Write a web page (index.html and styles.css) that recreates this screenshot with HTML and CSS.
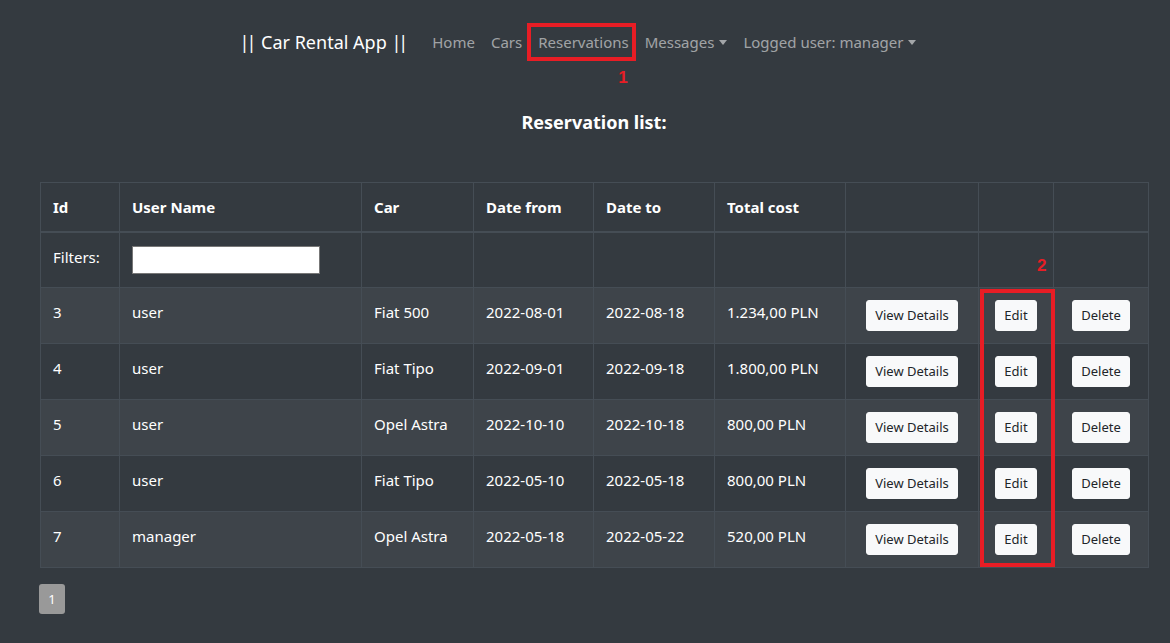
FILE: index.html
```html
<!DOCTYPE html>
<html lang="en">
<head>
<meta charset="utf-8">
<title>Car Rental App</title>
<link rel="stylesheet" href="styles.css">
</head>
<body>
<nav class="navbar">
  <a class="brand"><span class="pipes">||</span> Car Rental App <span class="pipes">||</span></a>
  <ul class="nav">
    <li><a class="nav-link">Home</a></li>
    <li><a class="nav-link">Cars</a></li>
    <li class="marked"><a class="nav-link">Reservations</a><span class="mark-box box-1"></span><span class="mark-num num-1">1</span></li>
    <li><a class="nav-link dropdown">Messages</a></li>
    <li><a class="nav-link dropdown">Logged user: manager</a></li>
  </ul>
</nav>

<main class="content">
  <h2 class="title">Reservation list:</h2>
  <div class="table-wrap">
    <table class="table">
      <colgroup>
        <col style="width:79px"><col style="width:242px"><col style="width:112px"><col style="width:120px"><col style="width:121px"><col style="width:131px"><col style="width:133px"><col style="width:75px"><col style="width:95px">
      </colgroup>
      <thead>
        <tr class="head-row">
          <th>Id</th><th>User Name</th><th>Car</th><th>Date from</th><th>Date to</th><th>Total cost</th><th></th><th></th><th></th>
        </tr>
        <tr class="filter-row">
          <td>Filters:</td><td><input class="filter-input" type="text"></td><td></td><td></td><td></td><td></td><td></td><td class="edit-col"><span class="mark-num num-2">2</span></td><td></td>
        </tr>
      </thead>
      <tbody>
        <tr><td>3</td><td>user</td><td>Fiat 500</td><td>2022-08-01</td><td>2022-08-18</td><td>1.234,00 PLN</td><td class="c"><button class="btn">View Details</button></td><td class="c"><button class="btn">Edit</button></td><td class="c"><button class="btn">Delete</button></td></tr>
        <tr><td>4</td><td>user</td><td>Fiat Tipo</td><td>2022-09-01</td><td>2022-09-18</td><td>1.800,00 PLN</td><td class="c"><button class="btn">View Details</button></td><td class="c"><button class="btn">Edit</button></td><td class="c"><button class="btn">Delete</button></td></tr>
        <tr><td>5</td><td>user</td><td>Opel Astra</td><td>2022-10-10</td><td>2022-10-18</td><td>800,00 PLN</td><td class="c"><button class="btn">View Details</button></td><td class="c"><button class="btn">Edit</button></td><td class="c"><button class="btn">Delete</button></td></tr>
        <tr><td>6</td><td>user</td><td>Fiat Tipo</td><td>2022-05-10</td><td>2022-05-18</td><td>800,00 PLN</td><td class="c"><button class="btn">View Details</button></td><td class="c"><button class="btn">Edit</button></td><td class="c"><button class="btn">Delete</button></td></tr>
        <tr><td>7</td><td>manager</td><td>Opel Astra</td><td>2022-05-18</td><td>2022-05-22</td><td>520,00 PLN</td><td class="c"><button class="btn">View Details</button></td><td class="c"><button class="btn">Edit</button></td><td class="c"><button class="btn">Delete</button></td></tr>
      </tbody>
    </table>
    <span class="mark-box box-2"></span>
  </div>
  <div class="pagination"><span class="page">1</span></div>
</main>
</body>
</html>
```

FILE: styles.css
```css
* { box-sizing: border-box; }
html, body { margin: 0; padding: 0; }
body {
  background: #343a40;
  color: #fff;
  font-family: "Noto Sans", "Open Sans", "Liberation Sans", sans-serif;
  font-size: 15px;
  line-height: 1.5;
  width: 1170px;
  height: 643px;
  overflow: hidden;
}
.navbar {
  display: flex;
  justify-content: center;
  align-items: center;
  height: 84px;
  margin-left: -6px;
}
.brand {
  font-size: 18px;
  color: #fff;
  margin-right: 16px;
}
.pipes { letter-spacing: -3px; margin-right: 3px; }
.nav {
  display: flex;
  list-style: none;
  margin: 0;
  padding: 0;
}
.nav li { position: relative; }
.nav-link {
  display: block;
  padding: 8px 8px;
  color: rgba(255,255,255,.55);
  font-size: 15px;
}
.dropdown::after {
  content: "";
  display: inline-block;
  margin-left: 5px;
  vertical-align: 3px;
  border-top: 5px solid;
  border-right: 4px solid transparent;
  border-left: 4px solid transparent;
}
.mark-box {
  position: absolute;
  border: 4px solid #e81d25;
  pointer-events: none;
}
.box-1 { left: -3px; right: 1px; top: 0; height: 38px; }
.mark-num {
  position: absolute;
  color: #e81d25;
  font-weight: bold;
  font-size: 17px;
  font-family: "Liberation Sans", sans-serif;
}
.num-1 { right: 9px; top: 42px; }
.content { padding: 0 22px 0 40px; }
.title {
  text-align: center;
  font-size: 18px;
  font-weight: bold;
  margin: 23px 0 45px;
  line-height: 30px;
}
.table-wrap { position: relative; width: 1108px; }
.table {
  width: 1108px;
  table-layout: fixed;
  border-collapse: collapse;
  border: 1px solid #8c8f93;
}
.table th, .table td {
  padding: 12px 12px;
  text-align: left;
  vertical-align: top;
  border: 1px solid #454d55;
  line-height: 24px;
}
.table th { font-weight: bold; border-bottom-width: 2px; }
.table td.c { text-align: center; padding: 12px 6px 10px; }
.filter-row td { height: 55px; }
.filter-input {
  display: block;
  width: 188px;
  height: 28px;
  border: 1px solid #777;
  background: #fff;
  margin: 1px 0 0;
}
.edit-col { position: relative; }
.num-2 { left: 58px; top: 21px; }
.table tbody tr { height: 56px; }
.table tbody tr:nth-child(odd) { background: #3e444a; }
.btn {
  font-family: inherit;
  font-size: 13px;
  line-height: 21px;
  padding: 4px 8px;
  background: #f8f9fa;
  color: #212529;
  border: 1px solid #f8f9fa;
  border-radius: 3px;
}
.box-2 { left: 940px; top: 107px; width: 75px; height: 278px; }
.pagination { margin-top: 16px; margin-left: -1px; display: flex; }
.page {
  display: block;
  width: 26px;
  height: 30px;
  line-height: 30px;
  text-align: center;
  background: #999;
  color: #fff;
  border-radius: 3px;
  font-size: 13px;
}
```
